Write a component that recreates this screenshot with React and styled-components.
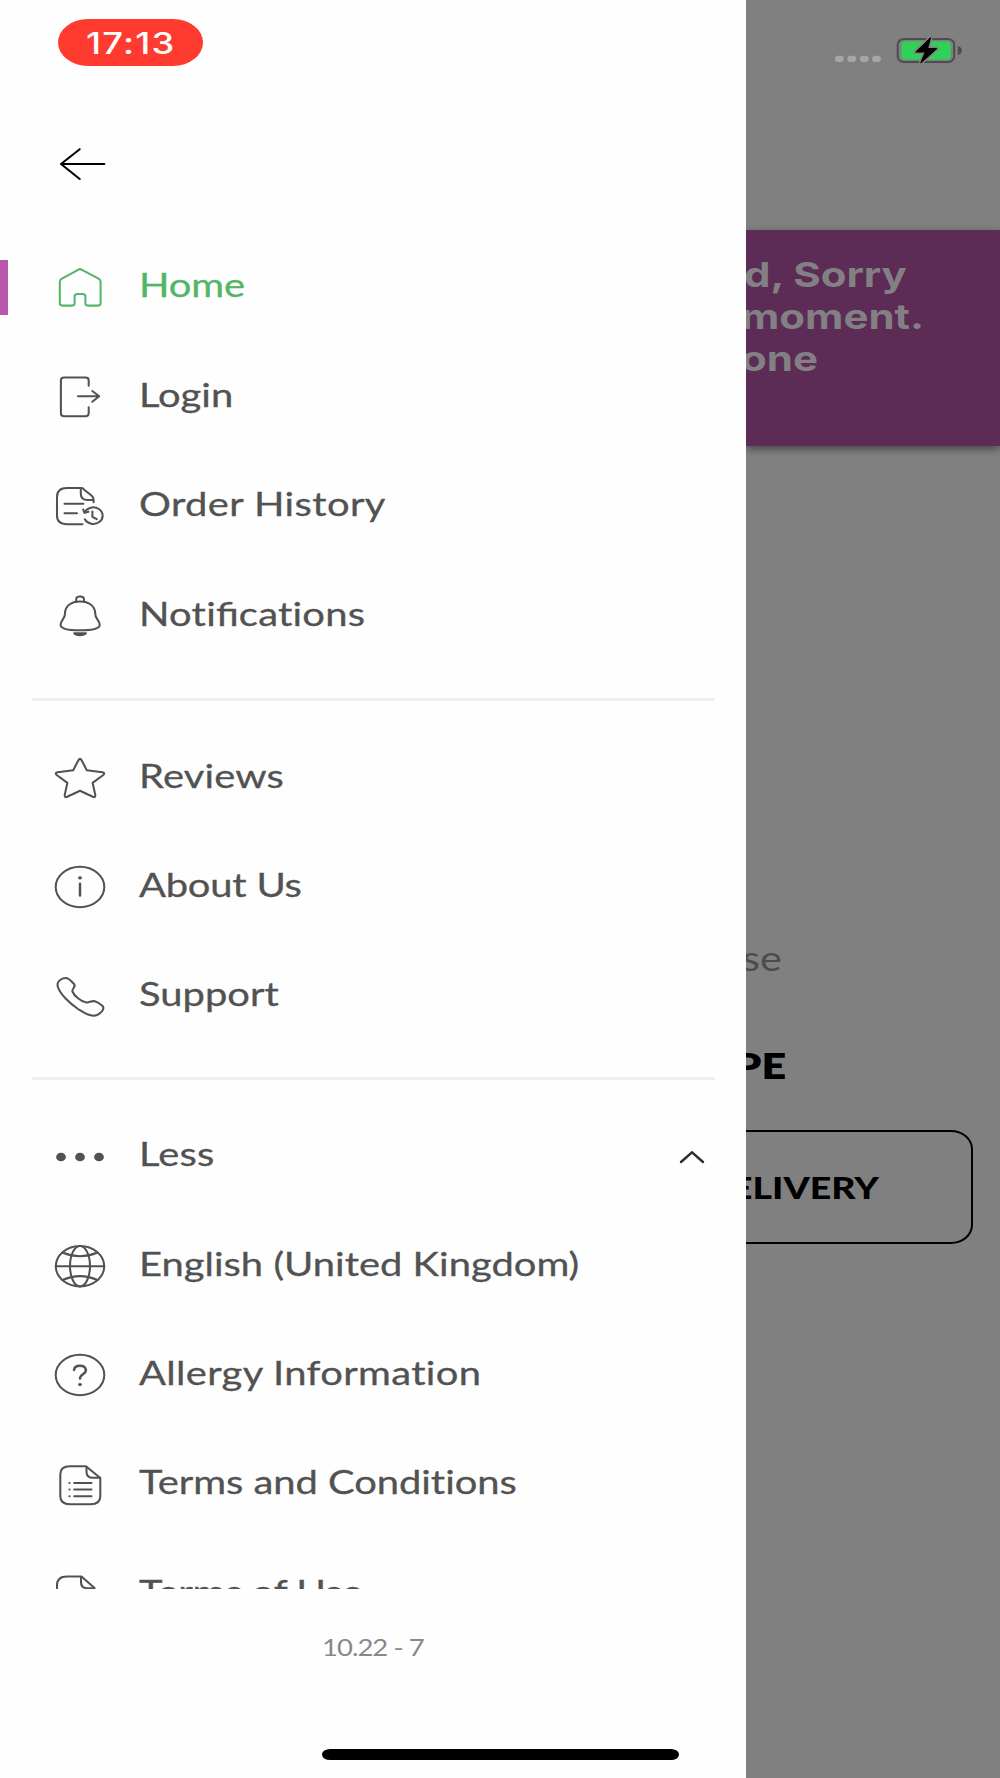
import React from "react";
import styled, { createGlobalStyle } from "styled-components";

const GlobalStyle = createGlobalStyle`
  * { box-sizing: border-box; }
  html, body { margin: 0; padding: 0; background: #808080; }
`;

const Screen = styled.div`
  display: flex;
  width: 1000px;
  height: 1778px;
  overflow: hidden;
  background: #808080;
  font-family: Lato, "Liberation Sans", sans-serif;
`;

const Drawer = styled.aside`
  display: flex;
  flex-direction: column;
  flex: none;
  width: 746.4px;
  height: 100%;
  background: #fefefe;
`;

const StatusArea = styled.header`
  height: 66px;
  padding: 19px 0 0 58.4px;
`;

const TimePill = styled.div`
  display: flex;
  align-items: center;
  justify-content: center;
  width: 144.8px;
  height: 47px;
  border-radius: 30px / 23.5px;
  background: #ff3a2f;
`;

const Wide = styled.span`
  display: inline-block;
  white-space: nowrap;
  transform: scaleX(${(p) => p.$by || 1.217});
  transform-origin: ${(p) => p.$origin || "left"} center;
`;

const TimeText = styled(Wide)`
  color: #fff;
  font: 500 29.8px/40px Inter, sans-serif;
  letter-spacing: 1px;
`;

const BackButton = styled.button`
  display: flex;
  height: 48px;
  margin: 74.4px 0 44.8px 50px;
  padding: 0;
  border: 0;
  background: none;
  align-self: flex-start;
`;

const MenuScroll = styled.nav`
  height: 1355.8px;
  overflow: hidden;
`;

const Row = styled.div`
  display: flex;
  align-items: center;
  height: 109.4px;
  padding-left: 42px;
  color: ${(p) => (p.$active ? "#53b566" : "#525252")};
`;

const ActiveMark = styled.i`
  width: 8px;
  height: 55px;
  margin-left: -42px;
  margin-right: 34px;
  margin-bottom: 1px;
  background: ${(p) => (p.$on ? "#b857ab" : "transparent")};
`;

const IconBox = styled.svg`
  flex: none;
  display: block;
  width: 60px;
  height: 48px;
  margin-left: 8px;
  overflow: visible;
  fill: none;
  stroke: currentColor;
  stroke-width: 2.05;
  stroke-linecap: round;
  stroke-linejoin: round;
`;

const Label = styled(Wide)`
  margin-left: 28.8px;
  padding-bottom: 4.8px;
  font-size: 32.8px;
  line-height: 40px;
  font-weight: 400;
  letter-spacing: ${(p) => p.$tracking}px;
  font-variant-ligatures: none;
  -webkit-text-stroke: 0.3px currentColor;
`;

const Ligature = styled.span`
  letter-spacing: 0;
  font-variant-ligatures: common-ligatures;
`;

const Caret = styled.svg`
  display: block;
  width: 28px;
  height: 16px;
  margin-left: auto;
  margin-right: 40.4px;
  fill: none;
  stroke: #2c2c2c;
  stroke-width: 2.4;
  stroke-linecap: round;
`;

const Divider = styled.hr`
  width: 682.4px;
  height: 3px;
  margin: ${(p) => p.$top}px 0 ${(p) => p.$bottom}px 32.2px;
  border: 0;
  background: #efefef;
`;

const Version = styled.div`
  display: flex;
  justify-content: center;
  height: 28px;
  margin-top: 45.5px;
  color: #888;
  font-size: 22.6px;
  line-height: 28px;
  letter-spacing: -0.8px;
`;

const HomeIndicator = styled.div`
  width: 357px;
  height: 11px;
  margin: 86.5px 0 0 322px;
  border-radius: 8px / 5.5px;
  background: #000;
`;

const Page = styled.main`
  display: flex;
  flex-direction: column;
  flex: 1;
  min-width: 0;
  overflow: hidden;
`;

const PageStatus = styled.div`
  display: flex;
  align-items: flex-start;
  height: 230px;
  padding: 32px 0 0 83px;
`;

const StatusIcons = styled.svg`
  display: block;
  width: 140px;
  height: 36px;
`;

const Banner = styled.section`
  height: 216px;
  padding-top: 24px;
  background: #5c2b56;
  box-shadow: 0 3px 8px rgba(0, 0, 0, 0.45);
`;

const BannerLine = styled.p`
  margin: 0 0 0 ${(p) => p.$shift}px;
  color: #838083;
  font: 700 34.5px/42px Inter, sans-serif;
`;

const Hint = styled.p`
  margin: 492px 0 0 ${(p) => p.$shift}px;
  color: #4c4c4c;
  font-size: 34px;
  line-height: 40px;
`;

const Heading = styled.h2`
  margin: 68px 0 0 ${(p) => p.$shift}px;
  color: #000;
  font-size: 35.4px;
  font-weight: 800;
  line-height: 40px;
`;

const DeliveryButton = styled.div`
  display: flex;
  align-items: center;
  width: 256.6px;
  height: 114px;
  margin: 44px 0 0 -30px;
  padding-left: ${(p) => p.$shift}px;
  border: 2.4px solid #000;
  border-radius: 22px / 19px;
  color: #000;
  font-size: 30.8px;
  font-weight: 900;
`;

const icons = {
  home: (
    <path d="M28 5.8 12 14.7Q9.8 16 9.8 18V39.3Q9.8 41.6 12.5 41.6H22Q24.6 41.6 24.6 39.3V32.5Q24.6 30 27.5 30H32.5Q35.4 30 35.4 32.5V39.3Q35.4 41.6 38 41.6H48Q50.6 41.6 50.6 39.3V18Q50.6 16 48.6 14.7L32 5.8Q30 4.4 28 5.8Z" />
  ),
  login: (
    <>
      <path d="M38.7 12.7V7.3Q38.7 4.4 35.4 4.4H14Q10.9 4.4 10.9 7.3V40.3Q10.9 43.2 14 43.2H35.4Q38.7 43.2 38.7 40.3V34.2" />
      <path d="M28 23.2H49M42.3 18 49.2 23.2 42.3 28.8" />
    </>
  ),
  history: (
    <>
      <path d="M32.5 41.2H17Q7 41.2 7 32.5V13.7Q7 5 17 5H31.5Q33 5 34.5 7L41.5 12.5Q43.6 14.5 43.6 16.5V19.3" />
      <path d="M30.8 6V10.5Q30.8 17 37.5 17H43" />
      <path d="M14.5 20.8H33.3M14.5 30.3H27" />
      <path d="M34.6 29.4A9.4 8.3 0 1 1 34.8 36.3" />
      <path d="M33.2 26.5 34.5 29.8 38.5 28.8M42.4 28.5V33.9L46.8 36.2" />
    </>
  ),
  bell: (
    <>
      <path d="M26.2 9.8V7Q26.2 4.5 30 4.5T34 7V9.8" />
      <path d="M30 9.5C21 9.5 15 14 15 21.5C15 27.5 10.6 27.5 10.6 33C10.6 37 19 38.3 30 38.3S49.7 37 49.7 33C49.7 27.5 45.2 27.5 45.2 21.5C45.2 14 39 9.5 30 9.5Z" />
      <path d="M24.2 41.2H36Q34.5 43.2 30 43.2T24.2 41.2Z" fill="currentColor" />
    </>
  ),
  star: (
    <path d="M28.4 6.2Q30 3.5 31.6 6.2L36.8 16.3 52.3 18.3Q55.6 18.9 53.3 21L42.6 28.8 45.3 41Q45.5 43.9 42.8 42.8L30 36.8 17.2 42.8Q14.5 43.9 14.7 41L17.4 28.8 6.7 21Q4.4 18.9 7.7 18.3L23.2 16.3Z" />
  ),
  info: (
    <>
      <ellipse cx="30" cy="24" rx="24.3" ry="20.2" />
      <ellipse cx="30" cy="14.8" rx="1" ry=".6" fill="currentColor" />
      <path d="M30 20.8V32.4" strokeWidth="2.5" />
    </>
  ),
  phone: (
    <path d="M8 14.3C6 9 11 5 15.8 5C19 5 20.8 8 23.6 10.5C27 13.5 21.8 15.2 22.4 18.5C24 22.5 31 28.8 36.5 29.5C39.5 29.8 41.5 27.4 44.8 28.3C48 29.4 50.5 31 52.6 33C55.5 36.5 49 42.6 43.5 42.8C37 42.5 32 38.5 28 36C20 30.5 10.3 21.5 8 14.3Z" />
  ),
  dots: (
    <g fill="currentColor" stroke="none">
      <ellipse cx="11" cy="24" rx="4.9" ry="4.3" />
      <ellipse cx="30" cy="24" rx="4.9" ry="4.3" />
      <ellipse cx="49" cy="24" rx="4.9" ry="4.3" />
    </g>
  ),
  globe: (
    <>
      <ellipse cx="30" cy="24.2" rx="24.2" ry="20.2" />
      <ellipse cx="30" cy="24.2" rx="10" ry="20.2" />
      <path d="M5.8 24.2H54.2M12.5 10.5Q30 18 47.5 10.5M12.5 38Q30 30.2 47.5 38" />
    </>
  ),
  help: (
    <>
      <ellipse cx="30" cy="24" rx="24.3" ry="20.2" />
      <path d="M24 19Q24.5 14.7 30 14.7T36 19.3C36 23 30 23 30 27.6" strokeWidth="2.5" />
      <ellipse cx="30" cy="33.5" rx="1" ry=".5" fill="currentColor" />
    </>
  ),
  list: (
    <>
      <path d="M20 5.3H36L50.3 17V35.3Q50.3 43.3 40.7 43.3H20Q10.3 43.3 10.3 35.3V13.3Q10.3 5.3 20 5.3Z" />
      <path d="M36.5 6V11Q36.5 16.8 43 16.8H50" />
      <path d="M24.2 22H41.5M24.2 28.5H41.5M24.2 35.2H41.5M19.4 22H19.6M19.4 28.5H19.6M19.4 35.2H19.6" />
    </>
  ),
  page: (
    <>
      <path d="M32.5 42.2H17Q7 42.2 7 33.5V15.2Q7 6.5 17 6.5H31.5L44.5 18V36" />
      <path d="M31 7V12Q31 18.3 37.5 18.3H44" />
    </>
  ),
};

const groups = [
  [
    { icon: "home", label: "Home", active: true, tracking: -0.1 },
    { icon: "login", label: "Login", tracking: 0 },
    { icon: "history", label: "Order History", tracking: 0.33 },
    { icon: "bell", label: <>Noti<Ligature>fi</Ligature>cations</>, tracking: 0.2 },
  ],
  [
    { icon: "star", label: "Reviews", tracking: 0.14 },
    { icon: "info", label: "About Us", tracking: -0.18 },
    { icon: "phone", label: "Support", tracking: 0 },
  ],
  [
    { icon: "dots", label: "Less", tracking: 0.15, expandable: true },
    { icon: "globe", label: "English (United Kingdom)", tracking: 0.01 },
    { icon: "help", label: "Allergy Information", tracking: 0.27 },
    { icon: "list", label: "Terms and Conditions", tracking: -0.03 },
    { icon: "page", label: "Terms of Use", tracking: -0.25 },
  ],
];

const dividers = [
  { top: 27.2, bottom: 22.3 },
  { top: 25.8, bottom: 21.7 },
];

function MenuRow({ icon, label, active, tracking, expandable }) {
  return (
    <Row $active={active}>
      <ActiveMark $on={active} />
      <IconBox viewBox="0 0 60 48">{icons[icon]}</IconBox>
      <Label $tracking={tracking}>{label}</Label>
      {expandable && (
        <Caret viewBox="0 0 28 16">
          <path d="M3 13 14 3.4 25 13" />
        </Caret>
      )}
    </Row>
  );
}

const BackIcon = styled(IconBox)`
  margin-left: 0;
  color: #000;
`;

export default function App() {
  return (
    <>
      <GlobalStyle />
      <Screen>
        <Drawer>
          <StatusArea>
            <TimePill>
              <TimeText $origin="center">17:13</TimeText>
            </TimePill>
          </StatusArea>
          <BackButton aria-label="Back">
            <BackIcon viewBox="0 0 60 48">
              <path d="M11 24H54.3M29.7 9.2 11 24 29.7 39" />
            </BackIcon>
          </BackButton>
          <MenuScroll>
            {groups.map((rows, i) => (
              <React.Fragment key={i}>
                {rows.map((row) => (
                  <MenuRow key={row.icon} {...row} />
                ))}
                {dividers[i] && <Divider $top={dividers[i].top} $bottom={dividers[i].bottom} />}
              </React.Fragment>
            ))}
          </MenuScroll>
          <Version>
            <Wide $origin="center">10.22 - 7</Wide>
          </Version>
          <HomeIndicator />
        </Drawer>
        <Page>
          <PageStatus>
            <StatusIcons viewBox="0 0 140 36">
              <g fill="#a6a6a6">
                <rect x="6" y="23.7" width="8.6" height="6.4" rx="3" />
                <rect x="18.4" y="23.7" width="8.6" height="6.4" rx="3" />
                <rect x="31" y="23.7" width="8.6" height="6.4" rx="3" />
                <rect x="43.2" y="23.7" width="8.6" height="6.4" rx="3" />
              </g>
              <rect x="68.7" y="7" width="56.5" height="23" rx="6.5" ry="5.5" fill="none" stroke="#4d4d4d" strokeWidth="2" />
              <rect x="72.5" y="9.6" width="49.2" height="18" rx="3.5" fill="#30d158" />
              <path d="M128.8 13.8Q133 15.5 133 18.4T128.8 23.2Z" fill="#4d4d4d" />
              <path
                d="M101.5 5.7 86.8 20H96.3L91.8 31 107.8 16.6H98.6Z"
                fill="#000"
                stroke="#808080"
                strokeWidth="4"
                strokeLinejoin="round"
                paintOrder="stroke"
              />
              <path d="M101.5 5.7 86.8 20H96.3L91.8 31 107.8 16.6H98.6Z" fill="#000" stroke="#000" strokeWidth="1" strokeLinejoin="round" />
            </StatusIcons>
          </PageStatus>
          <Banner>
            <BannerLine $shift={-2.6}>
              <Wide>d, Sorry</Wide>
            </BannerLine>
            <BannerLine $shift={-5}>
              <Wide>moment.</Wide>
            </BannerLine>
            <BannerLine $shift={-5}>
              <Wide>one</Wide>
            </BannerLine>
          </Banner>
          <Hint $shift={-4}>
            <Wide>se</Wide>
          </Hint>
          <Heading $shift={-12}>
            <Wide>PE</Wide>
          </Heading>
          <DeliveryButton $shift={13}>
            <Wide>ELIVERY</Wide>
          </DeliveryButton>
        </Page>
      </Screen>
    </>
  );
}
